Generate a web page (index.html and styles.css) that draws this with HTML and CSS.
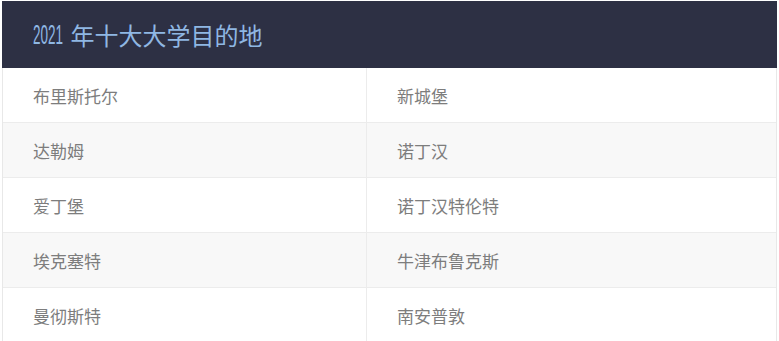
FILE: index.html
```html
<!DOCTYPE html>
<html lang="zh">
<head>
<meta charset="utf-8">
<link rel="stylesheet" href="styles.css">
</head>
<body>
<div class="card">
  <div class="title"><span class="year">2021</span> 年十大大学目的地</div>
  <div class="grid">
    <div class="cell">布里斯托尔</div><div class="cell">新城堡</div>
    <div class="cell alt">达勒姆</div><div class="cell alt">诺丁汉</div>
    <div class="cell">爱丁堡</div><div class="cell">诺丁汉特伦特</div>
    <div class="cell alt">埃克塞特</div><div class="cell alt">牛津布鲁克斯</div>
    <div class="cell">曼彻斯特</div><div class="cell">南安普敦</div>
  </div>
</div>
</body>
</html>
```
FILE: styles.css
```css
html, body { margin: 0; padding: 0; background: #fff; }
body { padding: 1px 2px 0 2px; }
.card {
  border-left: 1px solid #e8e8e8;
  border-right: 1px solid #e8e8e8;
}
.title {
  background: #2d3044;
  color: #8fb7e3;
  height: 67px;
  margin: 0 -1px;
  padding-left: 31px;
  display: flex;
  align-items: center;
  font-family: "Noto Sans CJK SC", sans-serif;
  font-size: 24px;
  white-space: pre;
}
.year {
  display: inline-block;
  font-family: "Liberation Sans", sans-serif;
  font-size: 27px;
  transform: scaleX(0.5);
  transform-origin: left center;
  margin-right: -28px;
  margin-top: 1px;
}
.grid {
  display: grid;
  grid-template-columns: 364px 1fr;
}
.cell {
  height: 54px;
  border-bottom: 1px solid #ececec;
  padding-left: 30px;
  display: flex;
  align-items: center;
  font-family: "Noto Sans CJK SC", sans-serif;
  font-size: 17px;
  color: #7d7d7d;
}
.cell:nth-child(odd) { border-right: 1px solid #ececec; }
.cell.alt { background: #f8f8f8; }
```
